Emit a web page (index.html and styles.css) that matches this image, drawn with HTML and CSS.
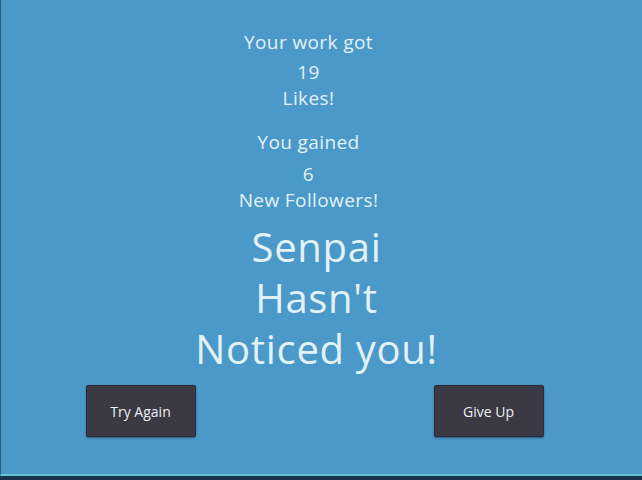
FILE: index.html
```html
<!DOCTYPE html>
<html lang="en">
<head>
    <meta charset="UTF-8">
    <title>Result</title>
    <link rel="stylesheet" href="styles.css">
</head>
<body>
    <div class="screen">
        <div class="stat">
            <div class="label">Your work got</div>
            <div class="count">19</div>
            <div class="unit">Likes!</div>
        </div>
        <div class="stat stat-second">
            <div class="label">You gained</div>
            <div class="count">6</div>
            <div class="unit">New Followers!</div>
        </div>
        <div class="verdict">
            <div>Senpai</div>
            <div>Hasn't</div>
            <div>Noticed you!</div>
        </div>
        <div class="actions">
            <button class="btn">Try Again</button>
            <button class="btn">Give Up</button>
        </div>
    </div>
</body>
</html>
```

FILE: styles.css
```css
*{
    margin: 0;
    padding: 0;
    box-sizing: border-box;
}
html,body{
    height: 100%;
}
body{
    background: #17324a;
}
.screen{
    height: 476px;
    background: #4a99c8;
    border-left: 1px solid #2a5f85;
    border-bottom: 2px solid #5fc4c8;
    padding-top: 29px;
    padding-right: 10px;
    display: flex;
    flex-direction: column;
    align-items: center;
    font-family: "Open Sans", sans-serif;
    color: #e2f1fa;
    text-align: center;
}
.stat{
    margin-right: 16px;
    font-size: 19px;
    line-height: 26px;
    letter-spacing: 0.4px;
}
.stat .count{
    margin-top: 4px;
}
.stat-second{
    margin-top: 18px;
}
.stat-second .count{
    margin-top: 6px;
}
.verdict{
    margin-top: 8px;
    font-size: 40px;
    line-height: 51px;
    letter-spacing: 0.7px;
}
.actions{
    margin-top: 11px;
    margin-right: 4px;
    width: 458px;
    display: flex;
    justify-content: space-between;
}
.btn{
    width: 110px;
    height: 52px;
    background: #3a3944;
    border: 1px solid #2c2b35;
    border-radius: 2px;
    box-shadow: 0 1px 2px rgba(20, 30, 50, 0.5);
    color: #eeeef2;
    font-family: "Open Sans", sans-serif;
    font-size: 14px;
}
```
